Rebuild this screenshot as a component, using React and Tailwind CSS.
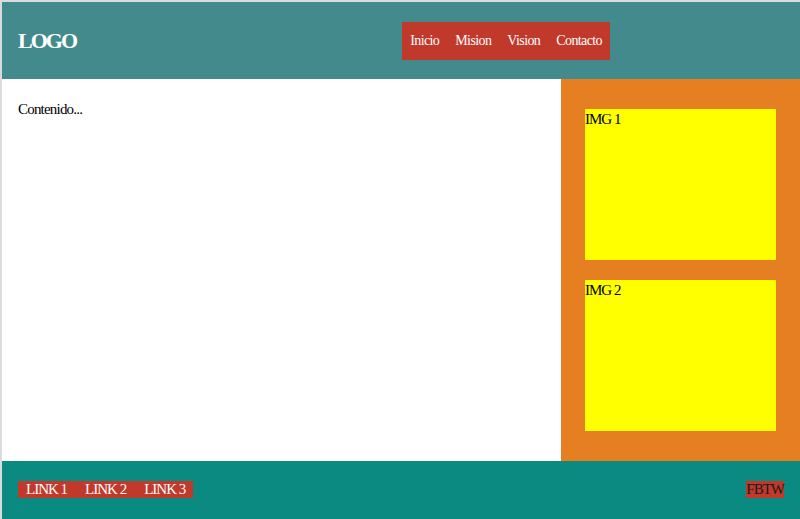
import React from 'react';

const navLinks = ['Inicio', 'Mision', 'Vision', 'Contacto'];
const footerLinks = ['LINK 1', 'LINK 2', 'LINK 3'];

const App = () => {
  return (
    <div className="min-h-screen bg-[#d9dcdc] pl-[2px] pt-[2px] font-['Liberation_Serif',serif]">
      <header className="flex h-[77px] items-center bg-[#428a8c] pl-[16px]">
        <h1 className="text-[22px] font-bold tracking-[-2px] text-white">LOGO</h1>
        <nav className="ml-auto mr-[190px] flex h-[38px] items-center bg-[#c0392b]">
          {navLinks.map((link) => (
            <a key={link} href="#" className="px-2 text-[14px] tracking-[-0.6px] text-white">
              {link}
            </a>
          ))}
        </nav>
      </header>

      <main className="flex h-[382px]">
        <section className="flex-1 bg-white px-[16px] pt-[20px]">
          <p className="text-[15px] leading-[20px] tracking-[-0.8px] text-black">Contenido...</p>
        </section>
        <aside className="flex w-[239px] flex-col gap-[20px] bg-[#e67e22] px-[24px] pt-[30px]">
          <div className="h-[151px] bg-[#ffff00] text-[15px] leading-[20px] tracking-[-1px] text-black">IMG 1</div>
          <div className="h-[151px] bg-[#ffff00] text-[15px] leading-[20px] tracking-[-1px] text-black">IMG 2</div>
        </aside>
      </main>

      <footer className="flex h-[58px] items-center justify-between bg-[#0a8a80] pb-[2px] pl-[16px] pr-[16px]">
        <ul className="flex bg-[#c0392b] px-[8px] leading-[17px]">
          {footerLinks.map((link, i) => (
            <li key={link} className={i === 0 ? 'text-[15px] tracking-[-1px] text-white' : 'ml-[18px] text-[15px] tracking-[-1px] text-white'}>
              {link}
            </li>
          ))}
        </ul>
        <span className="bg-[#c0392b] text-[15px] leading-[17px] tracking-[-1px] text-[#1a1a1a]">FBTW</span>
      </footer>
    </div>
  );
};

export default App;
